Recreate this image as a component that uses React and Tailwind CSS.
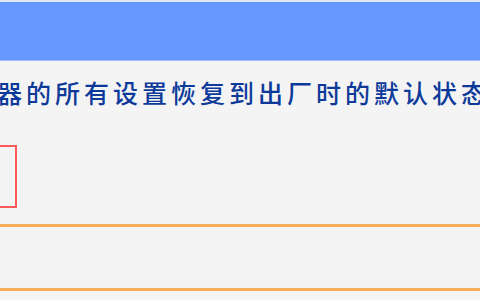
import React from "react";

const App = () => {
  return (
    <div className="w-[480px] h-[300px] overflow-hidden bg-[#f4f4f4] flex flex-col">
      <div className="h-[2px] bg-[#dfe6f5]" />
      <div className="h-[59px] bg-[#6699ff] border-b border-[#9dbbff]" />
      <div
        className="mt-[19px] ml-[-3px] text-[25px] leading-[24px] tracking-[4px] font-medium text-[#0d3a9a] whitespace-nowrap"
        style={{ fontFamily: '"Noto Sans CJK SC", sans-serif' }}
      >
        器的所有设置恢复到出厂时的默认状态
      </div>
      <div className="mt-[41px] ml-[-40px] w-[57px] h-[63px] border-2 border-[#ff5a5a]" />
      <div className="mt-[16px] h-[3px] bg-[#ffab5c]" />
      <div className="h-[61px]" />
      <div className="h-[3px] bg-[#ffab5c]" />
    </div>
  );
};

export default App;
